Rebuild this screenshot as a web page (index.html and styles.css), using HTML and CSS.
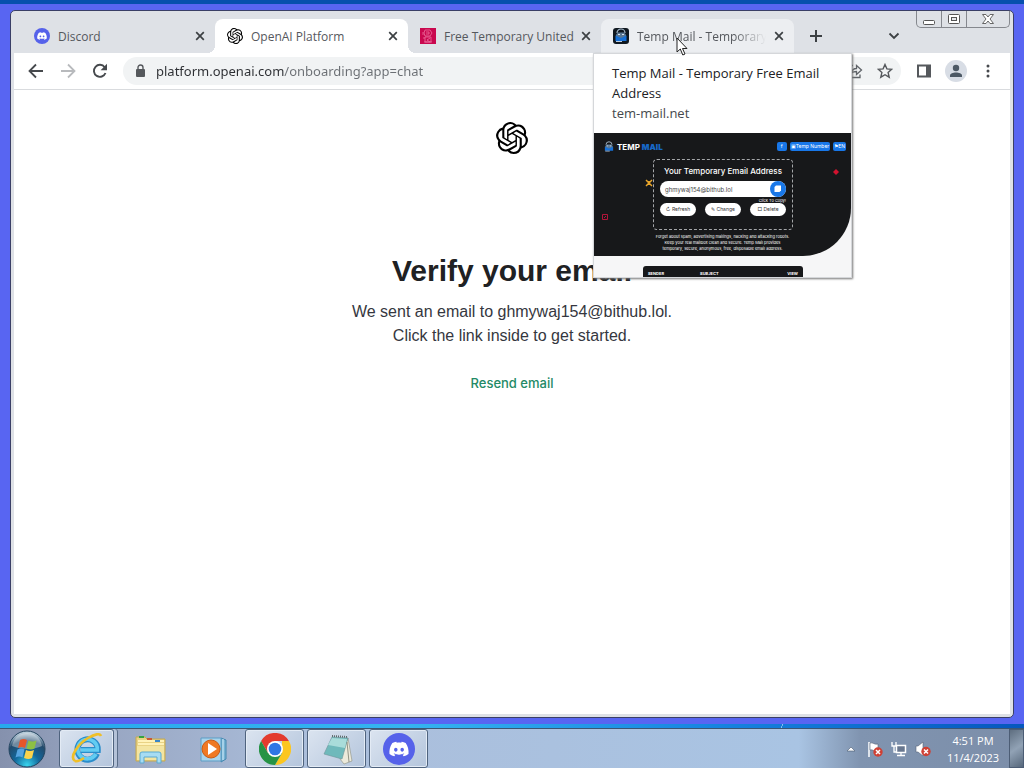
FILE: index.html
```html
<!DOCTYPE html>
<html lang="en">
<head>
<meta charset="utf-8">
<title>OpenAI Platform</title>
<link rel="stylesheet" href="styles.css">
</head>
<body>
<svg class="defs" width="0" height="0" aria-hidden="true">
  <symbol id="openai" viewBox="0 0 24 24"><path d="M22.2819 9.8211a5.9847 5.9847 0 0 0-.5157-4.9108 6.0462 6.0462 0 0 0-6.5098-2.9A6.0651 6.0651 0 0 0 4.9807 4.1818a5.9847 5.9847 0 0 0-3.9977 2.9 6.0462 6.0462 0 0 0 .7427 7.0966 5.98 5.98 0 0 0 .511 4.9107 6.051 6.051 0 0 0 6.5146 2.9001A5.9847 5.9847 0 0 0 13.2599 24a6.0557 6.0557 0 0 0 5.7718-4.2058 5.9894 5.9894 0 0 0 3.9977-2.9001 6.0557 6.0557 0 0 0-.7475-7.0729zm-9.022 12.6081a4.4755 4.4755 0 0 1-2.8764-1.0408l.1419-.0804 4.7783-2.7582a.7948.7948 0 0 0 .3927-.6813v-6.7369l2.02 1.1686a.071.071 0 0 1 .038.052v5.5826a4.504 4.504 0 0 1-4.4945 4.4944zm-9.6607-4.1254a4.4708 4.4708 0 0 1-.5346-3.0137l.142.0852 4.783 2.7582a.7712.7712 0 0 0 .7806 0l5.8428-3.3685v2.3324a.0804.0804 0 0 1-.0332.0615L9.74 19.9502a4.4992 4.4992 0 0 1-6.1408-1.6464zM2.3408 7.8956a4.485 4.485 0 0 1 2.3655-1.9728V11.6a.7664.7664 0 0 0 .3879.6765l5.8144 3.3543-2.0201 1.1685a.0757.0757 0 0 1-.071 0l-4.8303-2.7865A4.504 4.504 0 0 1 2.3408 7.872zm16.5963 3.8558L13.1038 8.364 15.1192 7.2a.0757.0757 0 0 1 .071 0l4.8303 2.7913a4.4944 4.4944 0 0 1-.6765 8.1042v-5.6772a.79.79 0 0 0-.407-.667zm2.0107-3.0231l-.142-.0852-4.7735-2.7818a.7759.7759 0 0 0-.7854 0L9.409 9.2297V6.8974a.0662.0662 0 0 1 .0284-.0615l4.8303-2.7866a4.4992 4.4992 0 0 1 6.6802 4.66zM8.3065 12.863l-2.02-1.1638a.0804.0804 0 0 1-.038-.0567V6.0742a4.4992 4.4992 0 0 1 7.3757-3.4537l-.142.0805L8.704 5.459a.7948.7948 0 0 0-.3927.6813zm1.0976-2.3654l2.602-1.4998 2.6069 1.4998v2.9994l-2.5974 1.4997-2.6067-1.4997Z"/></symbol>
  <symbol id="discord" viewBox="0 0 40 40"><circle cx="20" cy="20" r="20" fill="#5662ea"/><path transform="translate(8 8)" fill="#fff" d="M20.317 4.3698a19.7913 19.7913 0 00-4.8851-1.5152.0741.0741 0 00-.0785.0371c-.211.3753-.4447.8648-.6083 1.2495-1.8447-.2762-3.68-.2762-5.4868 0-.1636-.3933-.4058-.8742-.6177-1.2495a.077.077 0 00-.0785-.037 19.7363 19.7363 0 00-4.8852 1.515.0699.0699 0 00-.0321.0277C.5334 9.0458-.319 13.5799.0992 18.0578a.0824.0824 0 00.0312.0561c2.0528 1.5076 4.0413 2.4228 5.9929 3.0294a.0777.0777 0 00.0842-.0276c.4616-.6304.8731-1.2952 1.226-1.9942a.076.076 0 00-.0416-.1057c-.6528-.2476-1.2743-.5495-1.8722-.8923a.077.077 0 01-.0076-.1277c.1258-.0943.2517-.1923.3718-.2914a.0743.0743 0 01.0776-.0105c3.9278 1.7933 8.18 1.7933 12.0614 0a.0739.0739 0 01.0785.0095c.1202.099.246.1981.3728.2924a.077.077 0 01-.0066.1276 12.2986 12.2986 0 01-1.873.8914.0766.0766 0 00-.0407.1067c.3604.698.7719 1.3628 1.225 1.9932a.076.076 0 00.0842.0286c1.961-.6067 3.9495-1.5219 6.0023-3.0294a.077.077 0 00.0313-.0552c.5004-5.177-.8382-9.6739-3.5485-13.6604a.061.061 0 00-.0312-.0286zM8.02 15.3312c-1.1825 0-2.1569-1.0857-2.1569-2.419 0-1.3332.9555-2.4189 2.157-2.4189 1.2108 0 2.1757 1.0952 2.1568 2.419 0 1.3332-.9555 2.4189-2.1569 2.4189zm7.9748 0c-1.1825 0-2.1569-1.0857-2.1569-2.419 0-1.3332.9554-2.4189 2.1569-2.4189 1.2108 0 2.1757 1.0952 2.1568 2.419 0 1.3332-.946 2.4189-2.1568 2.4189Z"/></symbol>
  <symbol id="close" viewBox="0 0 10 10"><path d="M1.200 1.200 8.800 8.800M8.800 1.200 1.200 8.800" fill="none" stroke="#3c4043" stroke-width="1.700"/></symbol>
  <symbol id="robot" viewBox="0 0 16 16"><path d="M4 5a4 4 0 0 1 8 0" fill="none" stroke="#a9bccd" stroke-width="1.200"/><path d="M3 6.500 5 4.500h6l2 2v4H3z" fill="#5b7894"/><path d="M2.500 7.500 8 10l5.500-2.500v5.500h-11z" fill="#1770d6"/><path d="M5 6.500h2M9 6.500h2" stroke="#d7e3ee"/><path d="M3 13.500h6" stroke="#b9cbe0"/></symbol>
</svg>

<main class="desktop">
  <section class="window" aria-label="Browser window">
    <header class="titlebar">
      <div class="tabs" role="tablist">
        <div class="tab" role="tab">
          <svg class="favicon"><use href="#discord"/></svg>
          <span class="tab-title">Discord</span>
          <button class="tab-close" aria-label="Close Discord"><svg><use href="#close"/></svg></button>
        </div>
        <div class="tab tab-active" role="tab" aria-selected="true">
          <svg class="favicon"><use href="#openai"/></svg>
          <span class="tab-title">OpenAI Platform</span>
          <button class="tab-close" aria-label="Close OpenAI Platform"><svg><use href="#close"/></svg></button>
        </div>
        <div class="tab" role="tab">
          <svg class="favicon" viewBox="0 0 16 16"><path fill="#c9084f" d="M0 0h16v16H0z"/><path d="M5 2h5l2 3-2 3H5L4 5zM5 9h6v5H5zM3 10h2M3 4v3M6 4h3v2H6M10 10 7 12l3 2M4 14h8" fill="none" stroke="#ee6f9f" stroke-width=".8"/></svg>
          <span class="tab-title">Free Temporary United</span>
          <button class="tab-close" aria-label="Close Free Temporary United"><svg><use href="#close"/></svg></button>
        </div>
        <div class="tab tab-hover" role="tab">
          <svg class="favicon" viewBox="0 0 16 16"><rect width="16" height="16" rx="3" fill="#101820"/><use href="#robot" width="16" height="16"/></svg>
          <span class="tab-title tab-title-fade">Temp Mail - Temporary</span>
          <button class="tab-close" aria-label="Close Temp Mail"><svg><use href="#close"/></svg></button>

          <svg class="cursor" viewBox="0 0 12 19"><path d="M1 1v14l3.300-3 2.500 6 2.200-1-2.500-5.500H11z" fill="#fff" stroke="#222"/></svg>

          <aside class="hovercard">
            <div class="hovercard-text">
              <strong>Temp Mail - Temporary Free Email Address</strong>
              <span>tem-mail.net</span>
            </div>
            <div class="preview">
              <div class="preview-hero">
                <div class="preview-nav">
                  <span class="brand"><svg viewBox="0 0 16 16"><use href="#robot"/></svg>TEMP <b>MAIL</b></span>
                  <span class="chip chip-fb">f</span>
                  <span class="chip">&#9635;Temp Number</span>
                  <span class="chip">&#9873;EN</span>
                </div>
                <div class="preview-box">
                  <h2>Your Temporary Email Address</h2>
                  <div class="mailfield"><span>ghmywaj154@bithub.lol</span><svg viewBox="0 0 16 16"><circle cx="8" cy="8" r="8" fill="#1877e8"/><path d="M6 4.500h5v5L9.500 11H4.500V6z" fill="#fff"/></svg></div>
                  <div class="copyhint">Click To Copy!</div>
                  <div class="pills"><span>&#8635; Refresh</span><span>&#9998; Change</span><span>&#9633; Delete</span></div>
                </div>
                <p>Forget about spam, advertising mailings, hacking and attacking robots.<br>Keep your real mailbox clean and secure. Temp Mail provides<br>temporary, secure, anonymous, free, disposable email address.</p>
                <svg class="decor decor-star" viewBox="0 0 8 8"><path d="m1 1 6 6M7 1 1 7M4 2v4" stroke="#e9a52b" stroke-width="1.500"/></svg>
                <svg class="decor decor-square" viewBox="0 0 8 8"><path d="M1.500 1.500h5v5h-5zM3 5l2-2" stroke="#b3153a" fill="none"/></svg>
                <svg class="decor decor-dot" viewBox="0 0 8 8"><path d="m4 1 3 3-3 3-3-3z" fill="#d3122f"/></svg>
              </div>
              <div class="preview-table"><span>SENDER</span><span>SUBJECT</span><span>VIEW</span></div>
            </div>
          </aside>
        </div>
      </div>
      <button class="newtab" aria-label="New tab"><svg viewBox="0 0 12 12"><path d="M6 0v12M0 6h12" stroke="#3c4043" stroke-width="2"/></svg></button>
      <button class="tabsearch" aria-label="Search tabs"><svg viewBox="0 0 12 8"><path d="m1.500 1.500 4.500 4.500 4.500-4.500" fill="none" stroke="#3c4043" stroke-width="1.800"/></svg></button>
      <div class="controls">
        <button aria-label="Minimize"><svg viewBox="0 0 14 12"><rect x="1.500" y="7.500" width="11" height="4" rx="1" fill="#fff" stroke="#555"/></svg></button>
        <button aria-label="Restore"><svg viewBox="0 0 14 12"><rect x="1.500" y="1.500" width="11" height="9" rx="1" fill="#fff" stroke="#555"/><rect x="4.500" y="4.500" width="5" height="3" fill="#e5e7eb" stroke="#555"/></svg></button>
        <button class="controls-close" aria-label="Close"><svg viewBox="0 0 14 12"><path d="M1.500 1.500h3.500l2 2.500 2-2.500h3.500L9 6l3.500 4.500H9L7 8l-2 2.500H1.500L5 6z" fill="#fff" stroke="#666"/></svg></button>
      </div>
    </header>

    <nav class="toolbar">
      <button aria-label="Back"><svg viewBox="0 0 16 16"><path d="M15 8H2M8 1.500 1.500 8 8 14.500" fill="none" stroke="#46494d" stroke-width="1.800"/></svg></button>
      <button aria-label="Forward"><svg viewBox="0 0 16 16"><path d="M1 8h13M8 1.500 14.500 8 8 14.500" fill="none" stroke="#b8babd" stroke-width="1.800"/></svg></button>
      <button aria-label="Reload"><svg viewBox="0 0 16 16"><path d="M13.500 10a6 6 0 1 1-.8-5.800" fill="none" stroke="#46494d" stroke-width="1.900"/><path d="M15 .8v6.400H8.600z" fill="#46494d"/></svg></button>
      <label class="omnibox">
        <svg class="lock" viewBox="0 0 10 14"><rect x="1" y="5" width="9" height="8" rx="1" fill="#55585c"/><path d="M3 5.500V3.500a2.500 2.500 0 0 1 5 0v2" fill="none" stroke="#55585c" stroke-width="1.400"/></svg>
        <input type="text" aria-label="Address" value="platform.openai.com/onboarding?app=chat">
        <svg class="share" viewBox="0 0 16 16"><path d="M6 2.500H2v12h11v-3M4.500 10c.5-3 2.500-4.500 5-4.500V2.500L14.500 7l-5 4.500v-3c-2 0-3.500.3-5 1.500z" fill="none" stroke="#5f6368" stroke-width="1.300"/></svg>
        <svg class="star" viewBox="0 0 16 16"><path d="m8 1.500 1.900 4.400 4.800.4-3.600 3.200 1.100 4.700L8 11.700l-4.200 2.500 1.100-4.700L1.300 6.300l4.800-.4z" fill="none" stroke="#55585c" stroke-width="1.400"/></svg>
      </label>
      <button class="panel" aria-label="Side panel"><svg viewBox="0 0 16 16"><path fill="#55585c" d="M1 1.500h14v13H1zM3 3.500v9h7v-9z" fill-rule="evenodd"/></svg></button>
      <button class="avatar" aria-label="Profile"><svg viewBox="0 0 16 16"><circle cx="8" cy="5" r="3.200" fill="#4d5965"/><path d="M2 14v-1.500C2 10.500 5 9.500 8 9.500s6 1 6 3V14z" fill="#4d5965"/></svg></button>
      <button aria-label="Menu"><svg viewBox="0 0 16 16" fill="#46494d"><circle cx="8" cy="3" r="1.500"/><circle cx="8" cy="8" r="1.500"/><circle cx="8" cy="13" r="1.500"/></svg></button>
    </nav>

    <article class="page">
      <svg class="logo"><use href="#openai"/></svg>
      <h1>Verify your email</h1>
      <p>We sent an email to ghmywaj154@bithub.lol.<br>Click the link inside to get started.</p>
      <button class="resend">Resend email</button>
    </article>
  </section>
</main>

<footer class="taskbar">
  <button class="start" aria-label="Start">
    <svg viewBox="0 0 38 38">
      <defs><radialGradient id="orb" cx=".5" cy=".95" r=".9"><stop offset="0" stop-color="#39d5ee"/><stop offset=".4" stop-color="#12679b"/><stop offset=".75" stop-color="#234a6b"/><stop offset="1" stop-color="#b7cbd9"/></radialGradient></defs>
      <circle cx="19" cy="19" r="18" fill="url(#orb)" stroke="#244560"/>
      <path d="M4 16C6 6 13 3 19 3s13 3 15 13c-9 4-20 4-30 0z" fill="#fff" opacity=".35"/>
      <path d="M12 10c3-1.500 5-1 7 0l-2 8c-2-1-4-1.500-7 0z" fill="#e5562a"/><path d="M20.500 10.500c2 1 5 1.500 8 0l-2 8c-3 1.500-5 1-8 0z" fill="#8cc044"/>
      <path d="M9.500 19.500c3-1.500 5-1 7 0l-2 8c-2-1-4-1.500-7 0z" fill="#55a4e0"/><path d="M18 20c2 1 5 1.500 8 0l-2 8c-3 1.500-5 1-8 0z" fill="#fbd34c"/>
    </svg>
  </button>
  <button class="task task-open task-stack" aria-label="Internet Explorer">
    <svg viewBox="0 0 32 32"><path d="M26 20.500A10.200 10.200 0 1 1 26.800 17H10" fill="none" stroke="#2a8dcb" stroke-width="6"/><path d="M25 21A9.800 9.800 0 1 1 26.300 17H10" fill="none" stroke="#62ccf2" stroke-width="3.600"/><path d="M4 28C-2 24 7 11 17 5c7-4 12-5 13-2M4 28c3 1 6-1 9-3" fill="none" stroke="#efbf28" stroke-width="2.600"/></svg>
  </button>
  <button class="task" aria-label="Explorer">
    <svg viewBox="0 0 32 32"><path d="M1 4h9l2 2h18v22H1z" fill="#e9d385" stroke="#c5a950"/><path d="M3 8h26M3 11h26" stroke="#fff2b8" stroke-width="2"/><path d="M4 3h5v2H4z" fill="#35a340"/><path d="M12 5h5v2h-5z" fill="#cc5933"/><path d="M20 7h5v2h-5z" fill="#3a86c8"/><path d="M2 13h27v14H2z" fill="#f3e5a2"/><path d="M5 30V21q0-2 2-2h17q2 0 2 2v9h-4v-6H9v6z" fill="#a7dcf3" stroke="#5ba9d1"/></svg>
  </button>
  <button class="task" aria-label="Media Player">
    <svg viewBox="0 0 32 32"><path d="m24 5 5 2v19l-5 3z" fill="#76b1d2" stroke="#4488b0"/><path d="M4 5h20v23H4z" fill="#a8d4ec" stroke="#5c9dc5"/><path d="M26 6v21" stroke="#d8f2ff"/><circle cx="14" cy="16" r="9" fill="#ef7924" stroke="#c95b14"/><path d="m11 10 9 6-9 6z" fill="#fff"/></svg>
  </button>
  <button class="task task-open" aria-label="Chrome">
    <svg viewBox="0 0 32 32"><path d="M2.100 8A16 16 0 0 1 29.900 8H16L9 20z" fill="#e33b2e"/><path d="M29.900 8A16 16 0 0 1 16 32l7-12V8z" fill="#fcc61f"/><path d="M2.100 8A16 16 0 0 0 16 32l7-12H9z" fill="#269346"/><circle cx="16" cy="16" r="8" fill="#fff"/><circle cx="16" cy="16" r="6.300" fill="#2f76e5"/></svg>
  </button>
  <button class="task task-open" aria-label="Notepad">
    <svg viewBox="0 0 32 32"><path d="m27 5 4 23-8 3-4-5z" fill="#eceadb" stroke="#8c8e80" stroke-width=".6"/><path d="m11 4 16 1-6 21-18-5z" fill="#6fb9bb" stroke="#6d9498" stroke-width=".6"/><path d="m11 5 15 1-2 9-17-3z" fill="#a9dcda"/><path d="m11 3 16 1" stroke="#5f6b6c" stroke-width="2" stroke-dasharray="1 1"/><path d="m26 9 2 20" stroke="#7b7c6e" stroke-width=".8"/></svg>
  </button>
  <button class="task task-open" aria-label="Discord"><svg><use href="#discord"/></svg></button>
  <div class="tray">
    <button aria-label="Show hidden icons"><svg viewBox="0 0 16 16"><path d="m4 10 4-4 4 4z" fill="#fff" stroke="#4b5a70" stroke-width=".6"/></svg></button>
    <button aria-label="Action center"><svg viewBox="0 0 16 16"><path d="M2 1v15" stroke="#fff" stroke-width="1.500"/><path d="M3 2c3-1 4 2 8 1v7c-4 1-5-2-8-1z" fill="#fff" stroke="#566276" stroke-width=".6"/><circle cx="11" cy="11" r="4.700" fill="#cf4034"/><path d="m9 9 4 4m0-4-4 4" stroke="#fff" stroke-width="1.500"/></svg></button>
    <button aria-label="Network"><svg viewBox="0 0 16 16"><path d="M5.500 4.500h9v7h-9z" fill="#68778f" stroke="#fff" stroke-width="1.500"/><path d="M10 12v2M6 14.500h8M1 1v4h4V1M3 5v6h3" fill="none" stroke="#fff" stroke-width="1.300"/></svg></button>
    <button aria-label="Volume muted"><svg viewBox="0 0 16 16"><path d="M1 5h2l5-4v14l-5-4H1z" fill="#fff" stroke="#566276" stroke-width=".6"/><circle cx="11" cy="10.500" r="4.700" fill="#cf4034"/><path d="m9 8.500 4 4m0-4-4 4" stroke="#fff" stroke-width="1.500"/></svg></button>
  </div>
  <time class="clock">4:51 PM<br>11/4/2023</time>
  <button class="showdesktop" aria-label="Show desktop"></button>
</footer>
</body>
</html>
```

FILE: styles.css
```css
* { box-sizing: border-box; }

body {
  margin: 0;
  height: 100vh;
  display: flex;
  flex-direction: column;
  background: #5865f2;
  font-family: "Open Sans", "Noto Sans", sans-serif;
  color: #202124;
}

button {
  margin: 0;
  padding: 0;
  border: 0;
  background: none;
  font: inherit;
  display: flex;
  align-items: center;
  justify-content: center;
}

.defs { position: absolute; }

.desktop {
  flex: 1;
  min-height: 0;
  display: flex;
  padding: 10px 10px 10px;
  background:
    linear-gradient(#0650ae, #0650ae) top / 100% 4px no-repeat,
    linear-gradient(115deg, transparent 48%, #d8f1ff 50%, transparent 52%) 770px 100% / 24px 4px no-repeat,
    linear-gradient(90deg, #27a9ec, #35b4f0 40%, #1684e0 70%, #0657bd) bottom / 100% 4px no-repeat,
    #5865f2;
}

.window {
  flex: 1;
  min-width: 0;
  display: flex;
  flex-direction: column;
  border: 1px solid #3a3f66;
  border-radius: 5px;
  background: #dee1e6;
  padding: 0 3px 3px;
}

/* Tab strip */
.titlebar {
  display: flex;
  align-items: flex-start;
  height: 42px;
  padding-left: 8px;
}

.tabs { display: flex; padding-top: 8px; }

.tab {
  position: relative;
  width: 193px;
  height: 34px;
  padding: 0 10px 0 12px;
  display: flex;
  align-items: center;
  gap: 8px;
  font-size: 12px;
  color: #55585d;
  border-radius: 8px 8px 0 0;
}

.tab-active { background: #fff; }

.tab-active::before,
.tab-active::after {
  content: "";
  position: absolute;
  bottom: 0;
  width: 8px;
  height: 8px;
}

.tab-active::before { right: 100%; background: radial-gradient(circle at 0 0, transparent 8px, #fff 8px); }
.tab-active::after { left: 100%; background: radial-gradient(circle at 100% 0, transparent 8px, #fff 8px); }
.tab-hover { background: #eceef1; }

.favicon { width: 16px; height: 16px; flex: none; }
.tab-title { flex: 1; min-width: 0; white-space: nowrap; }
.tab-title-fade { mask-image: linear-gradient(90deg, #000 75%, transparent); }
.tab-close { width: 10px; height: 10px; }
.tab-close svg { width: 10px; height: 10px; }

.newtab { width: 28px; height: 28px; margin: 11px 0 0 8px; }
.newtab svg { width: 12px; height: 12px; }
.tabsearch { width: 28px; height: 28px; margin: 11px 8px 0 auto; }
.tabsearch svg { width: 12px; height: 8px; }

.controls {
  display: flex;
  height: 17px;
  border: 1px solid #85888e;
  border-top: 0;
  border-radius: 0 0 5px 5px;
}

.controls button { width: 25px; border-right: 1px solid #85888e; }
.controls .controls-close { width: 42px; border-right: 0; }
.controls svg { width: 14px; height: 12px; }

.cursor {
  position: absolute;
  z-index: 3;
  left: 75px;
  top: 18px;
  width: 12px;
  height: 19px;
}

/* Tab hover card */
.hovercard {
  position: absolute;
  z-index: 2;
  top: 100%;
  left: -8px;
  width: 259px;
  border: 1px solid #d5d7da;
  background: #fff;
  box-shadow: 1px 1px 2px #777;
  color: #202124;
}

.hovercard-text {
  height: 79px;
  padding: 9px 18px;
  font-size: 13px;
  line-height: 20px;
}

.hovercard-text strong { display: block; font-weight: 400; }
.hovercard-text span { display: block; color: #45484c; }

.preview {
  height: 144px;
  overflow: hidden;
  background: #f6f6f7;
  font-family: Inter, sans-serif;
}

.preview-hero {
  position: relative;
  height: 123px;
  padding: 7px 5px 0 9px;
  background: #17181a;
  border-bottom-right-radius: 48px;
  color: #fff;
}

.preview-nav { display: flex; align-items: center; gap: 3px; height: 13px; }
.brand { flex: 1; display: flex; align-items: center; gap: 2px; font-size: 8px; font-weight: 700; }
.brand svg { width: 12px; height: 12px; }
.brand b { color: #1768c8; }
.chip { padding: 0 1px; border-radius: 2px; background: #1877e8; font-size: 5px; line-height: 9px; }
.chip-fb { padding: 0 4px; }

.preview-box {
  width: 140px;
  height: 71px;
  margin: 6px 0 0 50px;
  padding: 5px 6px 0;
  border: 1px dashed #a5a7aa;
  border-radius: 4px;
}

.preview-box h2 {
  margin: 0 0 4px;
  font-size: 8px;
  font-weight: 500;
  line-height: 12px;
  text-align: center;
}

.mailfield {
  display: flex;
  align-items: center;
  justify-content: space-between;
  height: 16px;
  padding-left: 5px;
  border-radius: 8px;
  background: #fff;
  color: #444;
  font-size: 6px;
}

.mailfield svg { width: 16px; height: 16px; }
.copyhint { height: 6px; font-size: 4px; line-height: 8px; text-align: right; }
.pills { display: flex; justify-content: space-between; }

.pills span {
  width: 36px;
  border-radius: 7px;
  background: #fff;
  color: #333;
  font-size: 5px;
  line-height: 13px;
  text-align: center;
}

.preview-hero p {
  margin: 4px 0 0;
  padding-right: 4px;
  font-size: 4px;
  line-height: 6px;
  text-align: center;
}

.decor { position: absolute; width: 8px; height: 8px; }
.decor-star { left: 51px; top: 46px; }
.decor-square { left: 7px; top: 80px; }
.decor-dot { left: 238px; top: 35px; }

.preview-table {
  display: flex;
  justify-content: space-between;
  width: 160px;
  height: 12px;
  margin: 10px 0 0 49px;
  padding: 0 5px;
  border-radius: 3px 3px 0 0;
  background: #17181a;
  color: #fff;
  font-size: 4px;
  font-weight: 700;
  line-height: 15px;
}

.preview-table span:nth-child(2) { flex: 1; padding-left: 36px; }

/* Toolbar */
.toolbar {
  display: flex;
  align-items: center;
  gap: 4px;
  height: 37px;
  padding: 0 8px;
  background: #fff;
  border-bottom: 1px solid #d9dbde;
}

.toolbar button { width: 28px; height: 28px; }
.toolbar button svg { width: 16px; height: 16px; }

.omnibox {
  flex: 1;
  display: flex;
  align-items: center;
  height: 28px;
  margin: 0 5px;
  padding: 0 8px 0 12px;
  border-radius: 14px;
  background: #f1f3f4;
}

.lock { width: 10px; height: 14px; }

.omnibox input {
  flex: 1;
  min-width: 0;
  margin-left: 11px;
  padding: 0;
  border: 0;
  outline: 0;
  font: 13px "Noto Sans", "Open Sans", sans-serif;
  color: transparent;
  background: linear-gradient(90deg, #2d2f33 128px, #6b6f74 128px);
  background-clip: text;
}

.share { width: 16px; height: 16px; margin-right: 14px; }
.star { width: 16px; height: 16px; }
.toolbar .avatar { width: 22px; height: 22px; margin: 0 3px; border-radius: 11px; background: #d8dde5; }

/* Page content */
.page {
  flex: 1;
  display: flex;
  flex-direction: column;
  align-items: center;
  padding-top: 32px;
  background: #fff;
  font-family: "Liberation Sans", Arial, sans-serif;
  text-align: center;
}

.logo { width: 32px; height: 32px; }

.page h1 {
  margin: 97px 0 9px;
  font-size: 30px;
  line-height: 40px;
  font-weight: 700;
  color: #202123;
}

.page p { margin: 0; font-size: 16px; line-height: 24px; color: #353740; }

.resend {
  margin-top: 25px;
  font-family: Inter, sans-serif;
  font-size: 13px;
  font-weight: 500;
  line-height: 20px;
  color: #238a66;
}

/* Taskbar */
.taskbar {
  display: flex;
  align-items: stretch;
  height: 40px;
  border-top: 1px solid #3b5674;
  background: linear-gradient(90deg, #8591ad, #98a6c2 10%, #abbedb 30%, #a9c4e3 78%, #8094b0 84%, #7c8ea9);
}

.start { width: 54px; margin-right: 5px; }
.start svg { width: 38px; height: 38px; }

.task { width: 59px; margin-right: 3px; border-radius: 3px; }
.task svg { width: 32px; height: 32px; }

.task-open {
  border: 1px solid #4f637e;
  background: linear-gradient(135deg, #dbe4f0, #b4c5dc);
  box-shadow: inset 0 0 0 1px #e3ebf5;
}

.task-stack { width: 55px; margin-right: 7px; box-shadow: inset 0 0 0 1px #e3ebf5, 3px 0 #b4c2d8, 4px 0 #5a6d88; }

.tray { display: flex; align-items: center; gap: 8px; margin-left: auto; }
.tray button, .tray svg { width: 16px; height: 16px; }

.clock {
  width: 70px;
  margin: 3px 1px 0 7px;
  font-size: 11px;
  line-height: 17px;
  text-align: center;
  color: #fff;
}

.showdesktop {
  width: 15px;
  border: 1px solid #4c5d75;
  background: linear-gradient(145deg, #5e6e80, #91a2b5 50%, #56677b);
}
```
